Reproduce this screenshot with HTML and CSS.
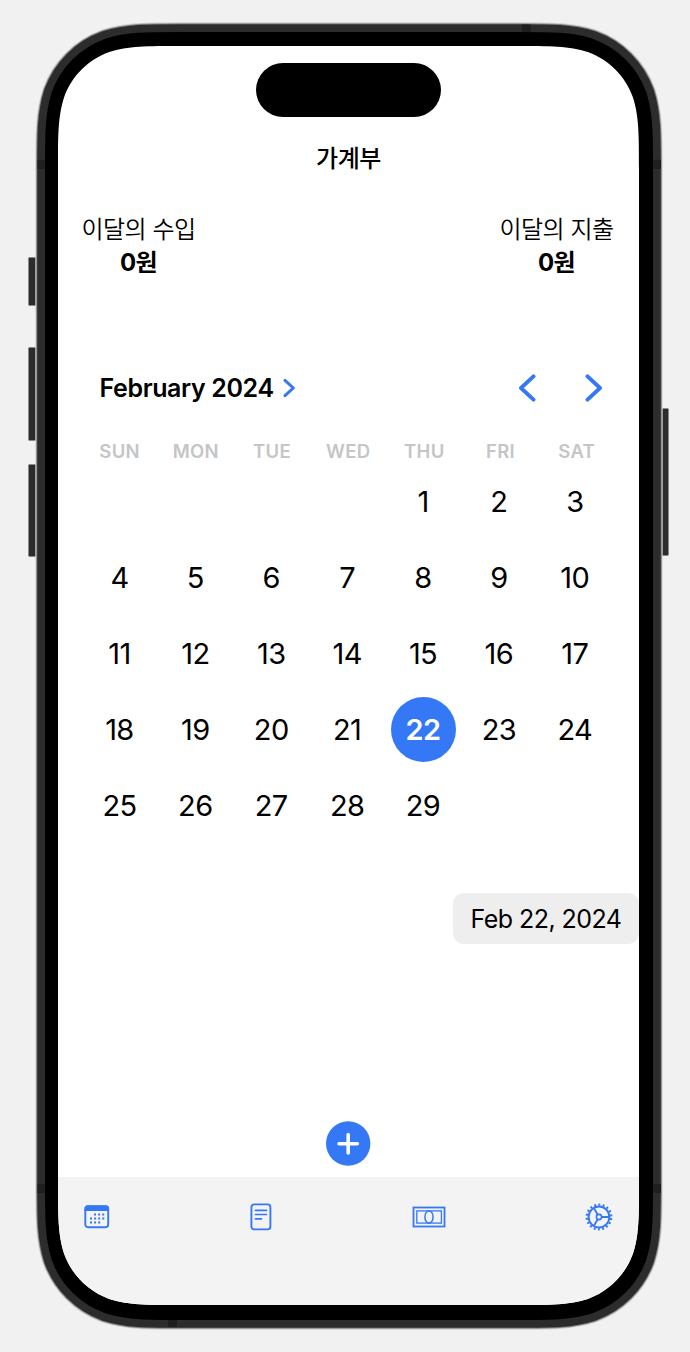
FILE: index.html
```html
<!DOCTYPE html>
<html lang="ko">
<head>
<meta charset="utf-8">
<title>가계부</title>
<link rel="stylesheet" href="styles.css">
</head>
<body>
<div class="device">
  <svg class="bezel" width="690" height="1352" viewBox="0 0 690 1352" aria-hidden="true">
    <defs>
      <path id="body" d="M181.8 45H516.2c35.6 0 53.5 0 72.6 6.1c21 7.6 37.5 24.1 45.1 45.1c6.1 19.1 6.1 37 6.1 72.6V1183.2c0 35.6 0 53.5-6.1 72.6c-7.6 21-24.1 37.5-45.1 45.1c-19.1 6.1-37 6.1-72.6 6.1H181.8c-35.6 0-53.5 0-72.6-6.1c-21-7.6-37.5-24.1-45.1-45.1c-6.1-19.1-6.1-37-6.1-72.6V168.8c0-35.6 0-53.5 6.1-72.6c7.6-21 24.1-37.5 45.1-45.1c19.1-6.1 37-6.1 72.6-6.1z"/>
    </defs>
    <g fill="#2c2c2c" stroke="#8a8a8a" stroke-width="1">
      <rect x="28.5" y="257.5" width="12" height="48" rx="1"/>
      <rect x="28.5" y="347.5" width="12" height="93" rx="1"/>
      <rect x="28.5" y="464.5" width="12" height="92" rx="1"/>
      <rect x="656.5" y="408.5" width="12" height="147" rx="1"/>
    </g>
    <use href="#body" stroke="#d2d2d2" stroke-width="45.4"/>
    <use href="#body" stroke="#858585" stroke-width="43.6"/>
    <use href="#body" stroke="#2c2c2c" stroke-width="41.6"/>
    <g fill="#1f1f1f">
      <rect x="37.5" y="160" width="8" height="9"/>
      <rect x="653" y="160" width="8" height="9"/>
      <rect x="37.5" y="1184" width="8" height="9"/>
      <rect x="653" y="1184" width="8" height="9"/>
      <rect x="522" y="24.5" width="9" height="8"/>
      <rect x="168" y="1319" width="9" height="8"/>
    </g>
    <use href="#body" stroke="#000" stroke-width="26"/>
  </svg>
  <main class="screen">
    <div class="island"></div>
    <h1 class="title">가계부</h1>
    <section class="summary">
      <div class="total"><span class="label">이달의 수입</span><strong class="amount">0원</strong></div>
      <div class="total"><span class="label">이달의 지출</span><strong class="amount">0원</strong></div>
    </section>
    <section class="calendar">
      <header class="month-bar">
        <h2 class="month">February 2024</h2>
        <svg class="month-more" width="13" height="20" viewBox="0 0 13 20"><path d="M2 2.3 10.3 10 2 17.7"/></svg>
        <svg class="step" width="18" height="28" viewBox="0 0 18 28"><path d="M15.5 2.4 3 14 15.5 25.6"/></svg>
        <svg class="step" width="18" height="28" viewBox="0 0 18 28"><path d="M2.5 2.4 15 14 2.5 25.6"/></svg>
      </header>
      <div class="weekdays"><span>SUN</span><span>MON</span><span>TUE</span><span>WED</span><span>THU</span><span>FRI</span><span>SAT</span></div>
      <div class="days">
        <span class="first">1</span><span>2</span><span>3</span>
        <span>4</span><span>5</span><span>6</span><span>7</span><span>8</span><span>9</span><span>10</span>
        <span>11</span><span>12</span><span>13</span><span>14</span><span>15</span><span>16</span><span>17</span>
        <span>18</span><span>19</span><span>20</span><span>21</span><span class="selected">22</span><span>23</span><span>24</span>
        <span>25</span><span>26</span><span>27</span><span>28</span><span>29</span>
      </div>
    </section>
    <div class="date-chip">Feb 22, 2024</div>
    <div class="add"><svg width="45" height="45" viewBox="-.5 -.5 45 45"><circle cx="21.7" cy="22" r="22.2"/><path d="M21.7 13V31.4M12.5 22.2H30.9"/></svg></div>
    <nav class="tabs">
      <svg width="26" height="24" viewBox="0 0 26 24"><rect x="1.3" y="1.3" width="22.9" height="20.9" rx="2.6" fill="none" stroke="currentColor" stroke-width="1.9"/><path d="M.5 6V3.5Q.5.5 3.5.5H22Q25 .5 25 3.5V6z" fill="currentColor"/><path d="M10 9.5H20.5M6 13.5H20.5M6 17.5H16.5" fill="none" stroke="currentColor" stroke-width="2" stroke-dasharray="2 2.1"/></svg>
      <svg width="22" height="28" viewBox="0 0 22 28"><g fill="none" stroke="currentColor" stroke-width="1.9"><rect x="1.4" y="1.4" width="19" height="25" rx="2.8"/><path d="M5.5 7.3H16.5M5.5 11.5H16.5M5.5 15.8H11.5" stroke-linecap="round" stroke-width="1.7"/></g></svg>
      <svg class="cash" width="34" height="22" viewBox="0 0 34 22"><g fill="none" stroke="currentColor" stroke-width="1.8"><rect x="1.5" y="1.5" width="31" height="19"/><rect x="4.8" y="4.9" width="24.6" height="12.2" stroke-width="1.3"/><ellipse cx="17" cy="11" rx="4.1" ry="6.1" stroke-width="1.5"/></g></svg>
      <svg width="28" height="28" viewBox="0 0 28 28"><g fill="none" stroke="currentColor"><circle cx="14" cy="14" r="10.4" stroke-width="2"/><circle cx="14" cy="14" r="12.3" stroke-width="2.2" stroke-dasharray="1.9 2.394" stroke-dashoffset="-1.2"/><circle cx="14" cy="14" r="2.6" stroke-width="1.6"/><path d="M16.6 14H24.5M12.7 11.7 8.7 4.8M12.7 16.3 8.7 23.2" stroke-width="1.8"/></g></svg>
    </nav>
  </main>
</div>
</body>
</html>
```
FILE: styles.css
```css
* { box-sizing: border-box; }

body {
  margin: 0;
  background: #f1f1f1;
  color: #000;
  font-family: Inter, "Noto Sans CJK KR", sans-serif;
}

.device {
  position: relative;
  width: 690px;
  height: 1352px;
  padding: 46px 51px 47px 58px;
}

.bezel {
  position: absolute;
  inset: 0;
}

.screen {
  position: relative;
  display: flex;
  flex-direction: column;
  width: 581px;
  height: 1259px;
  background: #fff;
  clip-path: path("M123.8 0H457.2c35.6 0 53.5 0 72.6 6.1c21 7.6 37.5 24.1 45.1 45.1c6.1 19.1 6.1 37 6.1 72.6V1135.2c0 35.6 0 53.5-6.1 72.6c-7.6 21-24.1 37.5-45.1 45.1c-19.1 6.1-37 6.1-72.6 6.1H123.8c-35.6 0-53.5 0-72.6-6.1c-21-7.6-37.5-24.1-45.1-45.1c-6.1-19.1-6.1-37-6.1-72.6V123.8c0-35.6 0-53.5 6.1-72.6c7.6-21 24.1-37.5 45.1-45.1c19.1-6.1 37-6.1 72.6-6.1z");
}

.island {
  flex: none;
  width: 185px;
  height: 54px;
  margin: 17px auto 0;
  border-radius: 27px;
  background: #000;
}

.title {
  margin: 23px 0 0;
  font: 500 24px/34px "Noto Sans CJK KR", sans-serif;
  letter-spacing: -0.4px;
  text-align: center;
}

.summary {
  display: flex;
  justify-content: space-between;
  height: 70px;
  margin: 37px 25px 0 23px;
}

.total {
  display: flex;
  flex-direction: column;
  align-items: center;
  width: 115px;
  white-space: nowrap;
}

.label {
  font: 350 24px/33px "Noto Sans CJK KR", sans-serif;
  letter-spacing: -0.5px;
}

.amount {
  margin-top: 2px;
  font-size: 24px;
  font-weight: 700;
  line-height: 33px;
  letter-spacing: -0.6px;
}

.calendar {
  margin: 82px 25px 0 23.5px;
}

.month-bar {
  display: flex;
  align-items: center;
  height: 50px;
  padding: 0 11px 0 18px;
}

.month {
  margin: 0;
  font-size: 25px;
  font-weight: 600;
  letter-spacing: -0.38px;
}

.month-more {
  margin: 0 auto 0 9px;
}

.month-bar svg {
  fill: none;
  stroke: #3478f6;
  stroke-width: 3;
  stroke-linecap: round;
  stroke-linejoin: round;
}

.month-bar .step {
  margin-left: 49px;
  stroke-width: 3.9;
}

.month-more + .step {
  margin-left: 0;
}

.weekdays,
.days {
  display: grid;
  grid-template-columns: repeat(7, 75.9px);
  text-align: center;
}

.weekdays {
  grid-template-columns: repeat(7, 76.2px);
  height: 51px;
  padding-top: 25px;
  color: #c5c5c7;
  font-size: 18.5px;
  font-weight: 600;
  line-height: 26px;
  letter-spacing: 0.3px;
}

.days {
  grid-auto-rows: 75.8px;
  font-size: 29px;
  letter-spacing: -0.6px;
  place-items: center;
}

.first { grid-column: 5; }

.selected {
  width: 65px;
  border-radius: 50%;
  background: #3478f6;
  color: #fff;
  font-weight: 600;
  line-height: 65px;
}

.date-chip {
  align-self: flex-end;
  width: 186px;
  height: 51px;
  margin-top: 50px;
  border-radius: 11px;
  background: #eee;
  font-size: 25px;
  line-height: 52px;
  text-align: center;
  letter-spacing: -0.55px;
}

.add {
  display: flex;
  justify-content: center;
  margin-top: auto;
  padding-bottom: 11px;
}

.add circle { fill: #3478f6; }

.add path {
  stroke: #fff;
  stroke-width: 3.6;
  stroke-linecap: round;
}

.tabs {
  display: flex;
  align-items: center;
  justify-content: space-between;
  height: 128px;
  padding: 0 26px 49px;
  background: #f3f3f3;
  color: #3478f6;
}

.cash { margin: 0 -1px 0 1px; }
```
